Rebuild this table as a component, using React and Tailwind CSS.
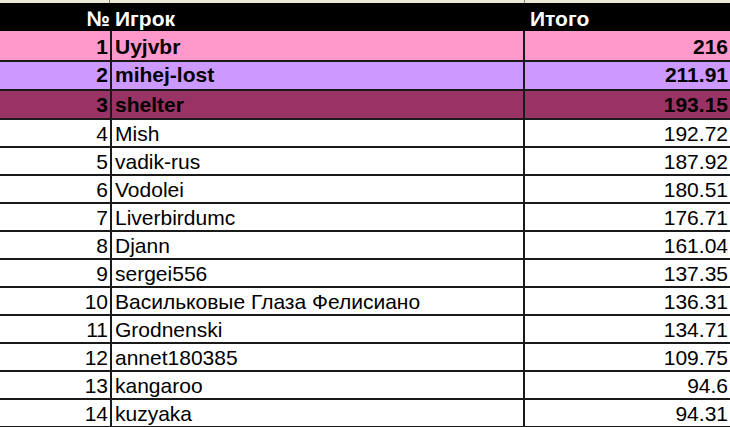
const ROWS = [
  { n: 1, name: 'Uyjvbr', total: '216', bg: 'bg-[#ff99cc]', h: 'h-[31px]', pt: 'pt-[5px]', bold: true },
  { n: 2, name: 'mihej-lost', total: '211.91', bg: 'bg-[#cc99ff]', h: 'h-[29px]', pt: 'pt-[2px]', bold: true },
  { n: 3, name: 'shelter', total: '193.15', bg: 'bg-[#993366]', h: 'h-[29px]', pt: 'pt-[3px]', bold: true },
  { n: 4, name: 'Mish', total: '192.72' },
  { n: 5, name: 'vadik-rus', total: '187.92' },
  { n: 6, name: 'Vodolei', total: '180.51' },
  { n: 7, name: 'Liverbirdumc', total: '176.71' },
  { n: 8, name: 'Djann', total: '161.04' },
  { n: 9, name: 'sergei556', total: '137.35' },
  { n: 10, name: 'Васильковые Глаза Фелисиано', total: '136.31' },
  { n: 11, name: 'Grodnenski', total: '134.71' },
  { n: 12, name: 'annet180385', total: '109.75' },
  { n: 13, name: 'kangaroo', total: '94.6' },
  { n: 14, name: 'kuzyaka', total: '94.31' },
]

function Row({ r }) {
  const bg = r.bg || 'bg-white'
  const h = r.h || 'h-[28px]'
  const pt = r.pt || 'pt-[3px]'
  const weight = r.bold ? 'font-bold' : 'font-normal'
  return (
    <div className={`grid grid-cols-[112px_413px_1fr] ${h} ${bg} ${weight} border-b-2 border-[#1a1a1a] text-black`}>
      <div className={`${pt} pr-[2px] text-right border-r-2 border-[#1a1a1a]`}>{r.n}</div>
      <div className={`${pt} pl-[3px] whitespace-nowrap border-r-2 border-[#1a1a1a]`}>{r.name}</div>
      <div className={`${pt} pr-[2px] text-right`}>{r.total}</div>
    </div>
  )
}

export default function App() {
  return (
    <div
      className="w-[730px] h-[427px] overflow-hidden bg-white text-[21px] leading-[21px]"
      style={{ fontFamily: '"Liberation Sans", Arial, sans-serif' }}
    >
      {/* strip of the row above */}
      <div className="grid grid-cols-[110px_415px_1fr] h-[3px] bg-[#ece9d8]">
        <div className="border-r border-[#8a8778]" />
        <div className="border-r border-[#8a8778]" />
        <div />
      </div>

      {/* header */}
      <div className="grid grid-cols-[112px_413px_1fr] h-[28px] bg-black text-white font-bold">
        <div className="pt-[5px] pr-[2px] text-right">№</div>
        <div className="pt-[5px] pl-[3px]">Игрок</div>
        <div className="pt-[5px] pl-[5px]">Итого</div>
      </div>

      {ROWS.map(r => <Row key={r.n} r={r} />)}
    </div>
  )
}
